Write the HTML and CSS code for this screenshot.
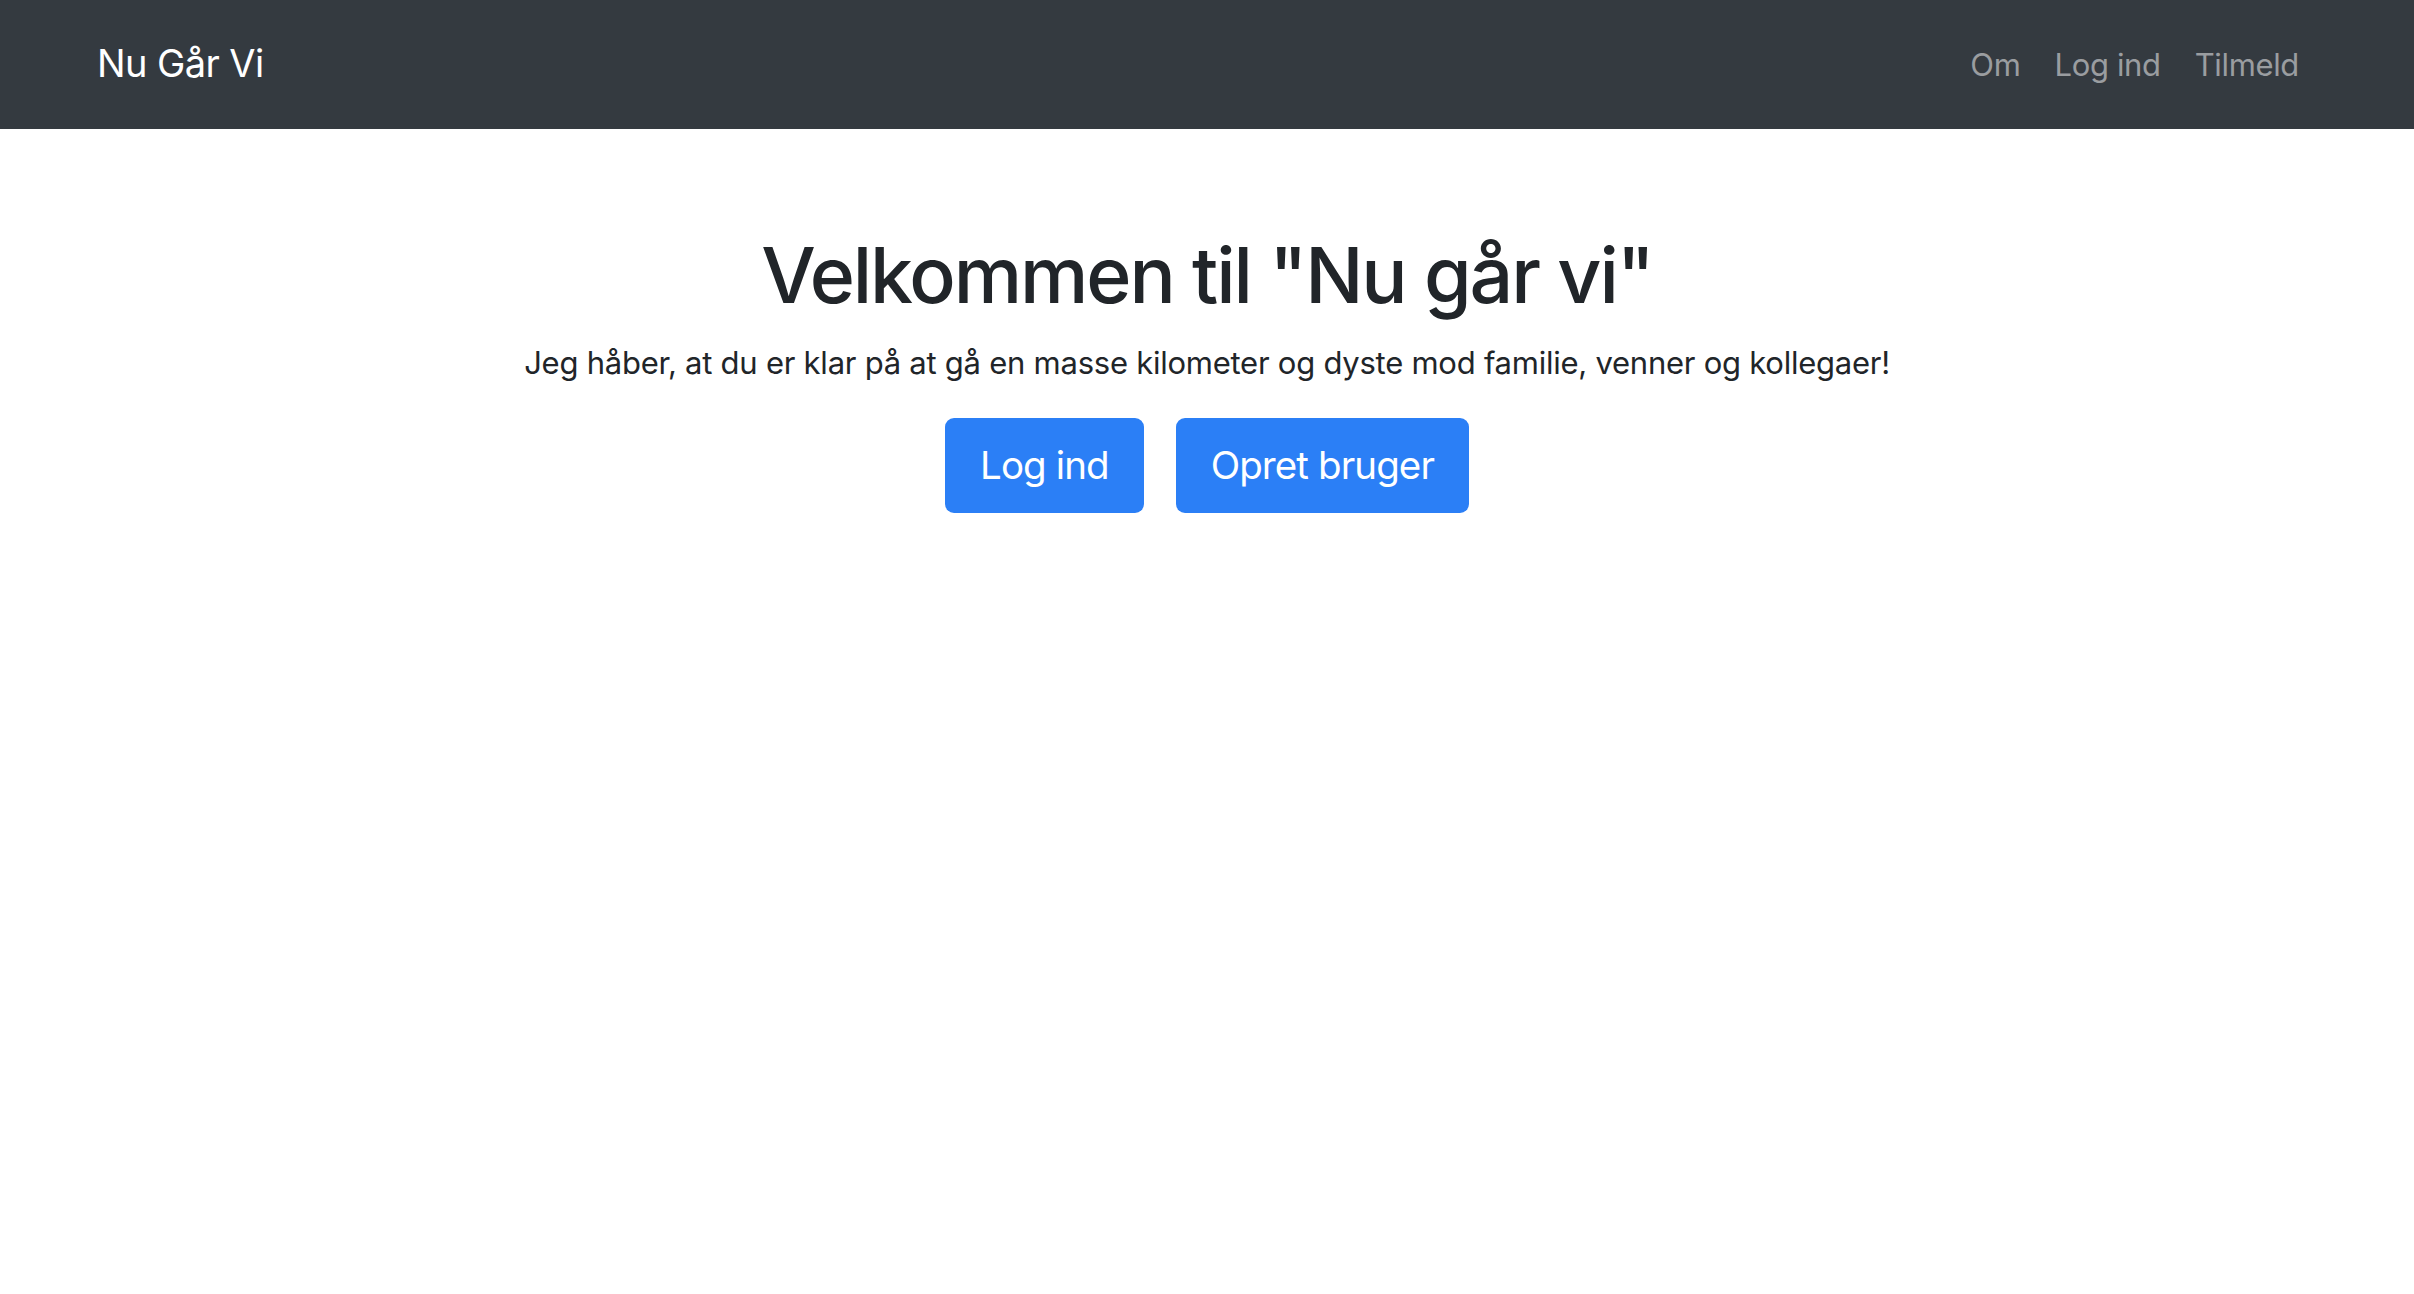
FILE: index.html
```html
<!DOCTYPE html>
<html lang="da">
<head>
<meta charset="utf-8">
<title>Nu Går Vi</title>
<link rel="stylesheet" href="styles.css">
</head>
<body>
<nav class="navbar">
  <a class="brand" href="#">Nu Går Vi</a>
  <ul class="nav-links">
    <li><a href="#">Om</a></li>
    <li><a href="#">Log ind</a></li>
    <li><a href="#">Tilmeld</a></li>
  </ul>
</nav>
<main class="hero">
  <h1 class="title">Velkommen til "Nu går vi"</h1>
  <p class="lead">Jeg håber, at du er klar på at gå en masse kilometer og dyste mod familie, venner og kollegaer!</p>
  <div class="actions">
    <a class="btn" href="#">Log ind</a>
    <a class="btn" href="#">Opret bruger</a>
  </div>
</main>
</body>
</html>
```

FILE: styles.css
```css
* { box-sizing: border-box; }
html, body {
  margin: 0;
  padding: 0;
  background: #ffffff;
  font-family: Inter, "Noto Sans", "Liberation Sans", sans-serif;
  color: #212529;
}
a { text-decoration: none; }

.navbar {
  height: 129px;
  background: #343a40;
  display: flex;
  align-items: center;
  justify-content: space-between;
  padding: 0 115px 0 97px;
}
.brand {
  color: #ffffff;
  font-size: 38px;
  line-height: 1;
  letter-spacing: -0.6px;
  padding-bottom: 3px;
}
.nav-links {
  list-style: none;
  margin: 0;
  padding: 0;
  display: flex;
  gap: 34px;
}
.nav-links a {
  color: #9a9da0;
  font-size: 31px;
  line-height: 1;
  letter-spacing: -0.35px;
}

.hero {
  display: flex;
  flex-direction: column;
  align-items: center;
  text-align: center;
  padding-top: 100px;
}
.title {
  margin: 0;
  font-size: 77px;
  font-weight: 500;
  line-height: 92px;
  letter-spacing: -2.1px;
  color: #212529;
}
.lead {
  margin: 19px 0 0;
  font-size: 31px;
  line-height: 46px;
  font-weight: 400;
  letter-spacing: -0.25px;
}
.actions {
  margin-top: 32px;
  display: flex;
  gap: 32px;
}
.btn {
  display: inline-block;
  background: #2b7ff6;
  color: #ffffff;
  font-size: 38.5px;
  line-height: 57px;
  letter-spacing: -0.9px;
  padding: 19px 35px;
  border-radius: 9px;
}
```
